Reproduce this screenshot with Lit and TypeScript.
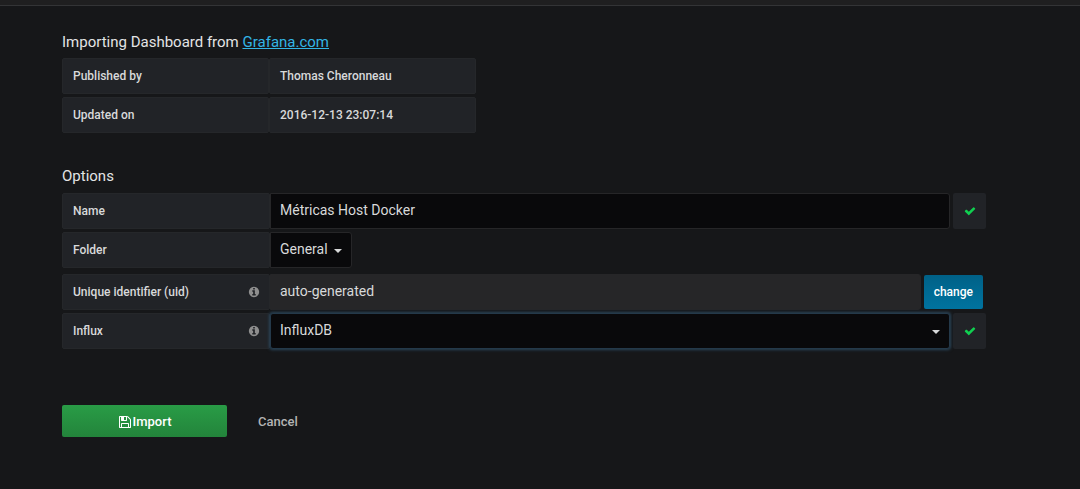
import { LitElement, html, css, svg } from "lit";
import { customElement, state } from "lit/decorators.js";

const PATHS = {
  check:
    "M1671 566q0 40-28 68l-724 724-136 136q-28 28-68 28t-68-28l-136-136-362-362q-28-28-28-68t28-68l136-136q28-28 68-28t68 28l294 295 656-657q28-28 68-28t68 28l136 136q28 28 28 68z",
  info: "M1152 1376v-160q0-14-9-23t-23-9h-96v-512q0-14-9-23t-23-9h-320q-14 0-23 9t-9 23v160q0 14 9 23t23 9h96v320h-96q-14 0-23 9t-9 23v160q0 14 9 23t23 9h448q14 0 23-9t9-23zm-128-896v-160q0-14-9-23t-23-9h-192q-14 0-23 9t-9 23v160q0 14 9 23t23 9h192q14 0 23-9t9-23zm640 416q0 209-103 385.5t-279.5 279.5-385.5 103-385.5-103-279.5-279.5-103-385.5 103-385.5 279.5-279.5 385.5-103 385.5 103 279.5 279.5 103 385.5z",
  save: "M512 1536h768v-384h-768v384zm896 0h128v-896q0-14-10-38.5t-20-34.5l-281-281q-10-10-34-20t-39-10v416q0 40-28 68t-68 28h-576q-40 0-68-28t-28-68v-416h-128v1280h128v-416q0-40 28-68t68-28h832q40 0 68 28t28 68v416zm-384-928v-320q0-13-9.5-22.5t-22.5-9.5h-192q-13 0-22.5 9.5t-9.5 22.5v320q0 13 9.5 22.5t22.5 9.5h192q13 0 22.500-9.500t9.500-22.500zm640 32v928q0 40-28 68t-68 28h-1344q-40 0-68-28t-28-68v-1344q0-40 28-68t68-28h928q40 0 88 20t76 48l280 280q28 28 48 76t20 88z",
};

const icon = (name: keyof typeof PATHS, cls: string) => html`
  <svg class="icon ${cls}" viewBox="0 0 1792 1792" aria-hidden="true">
    ${svg`<path d=${PATHS[name]} />`}
  </svg>
`;

const caret = html`
  <svg class="caret" viewBox="0 0 8 4" aria-hidden="true"><path d="M0 0h8l-4 4z" /></svg>
`;

@customElement("app-root")
export class AppRoot extends LitElement {
  @state() private name = "Métricas Host Docker";

  static styles = css`
    :host {
      display: block;
      min-height: 100vh;
      background: #161719;
      color: #d8d9da;
      font-family: Roboto, "Liberation Sans", sans-serif;
      font-size: 14px;
      line-height: 20px;
    }
    * {
      box-sizing: border-box;
    }
    .topbar {
      height: 6px;
      background: #1f1f20;
      border-bottom: 1px solid #333436;
    }
    .page {
      padding: 26px 94px 52px 62px;
    }
    .title {
      margin: 0 0 6px;
      color: #e3e4e5;
      font-size: 15px;
      font-weight: 400;
      line-height: 20px;
    }
    .link {
      color: #33b5e5;
      text-decoration: underline;
    }
    .facts {
      display: grid;
      grid-template-columns: 207px 207px;
      row-gap: 3px;
      margin: 0 0 33px;
    }
    .label {
      display: flex;
      align-items: center;
      justify-content: space-between;
      flex: 0 0 208px;
      height: 36px;
      margin: 0;
      padding: 0 10px;
      background: #212327;
      border: 1px solid #25272a;
      border-radius: 2px;
      font-size: 12px;
      font-weight: 500;
    }
    .form {
      display: flex;
      flex-direction: column;
      gap: 3px;
      padding-top: 1px;
    }
    .group-end {
      margin-bottom: 3px;
    }
    .row {
      display: flex;
      align-items: center;
    }
    .control {
      display: block;
      width: 100%;
      height: 36px;
      margin: 0;
      padding: 0 9px 2px;
      color: #d8d9da;
      background: #09090b;
      border: 1px solid #262628;
      border-radius: 0 3px 3px 0;
      outline: none;
      appearance: none;
      font: inherit;
    }
    .control:disabled {
      background: #262628;
      opacity: 1;
    }
    .grow {
      flex: 1;
      min-width: 0;
    }
    .select {
      display: grid;
      align-items: center;
    }
    .select > * {
      grid-area: 1 / 1;
    }
    .compact {
      width: 82px;
    }
    .active {
      border-color: #24394a;
      border-radius: 3px;
      box-shadow: 0 0 3px 1px #2a4559;
    }
    .caret {
      justify-self: end;
      width: 8px;
      height: 4px;
      margin: 2px 10px 0 0;
      fill: #d8d9da;
      pointer-events: none;
    }
    .icon {
      display: block;
      flex: none;
      fill: currentColor;
    }
    .info {
      width: 12px;
      height: 12px;
      margin-right: -1px;
      color: #8e8e8e;
    }
    .status {
      display: grid;
      place-items: center;
      width: 33px;
      height: 36px;
      margin-left: 3px;
      background: #212327;
      border-radius: 2px;
      color: #10d050;
    }
    .tick {
      width: 12px;
      height: 12px;
    }
    .button {
      display: flex;
      align-items: center;
      justify-content: center;
      margin: 0;
      border: 0;
      border-radius: 2px;
      color: #fff;
      font: 500 13px/20px Roboto, "Liberation Sans", sans-serif;
      cursor: pointer;
    }
    .change {
      height: 34px;
      margin: 0 3px;
      padding: 0 10px;
      background: linear-gradient(#006187, #00739f);
      font-size: 12px;
    }
    .actions {
      display: flex;
      align-items: center;
      gap: 31px;
      margin-top: 53px;
    }
    .import {
      width: 165px;
      height: 32px;
      gap: 1px;
      padding: 2px 0 0;
      background: linear-gradient(#299c46, #23843b);
    }
    .disk {
      width: 14px;
      height: 14px;
    }
    .cancel {
      padding-top: 2px;
      color: #b3b3b3;
      font-size: 13px;
      font-weight: 500;
      text-decoration: none;
    }
  `;

  render() {
    return html`
      <div class="topbar"></div>
      <main class="page">
        <h1 class="title">
          Importing Dashboard from <a class="link" href="#">Grafana.com</a>
        </h1>
        <dl class="facts">
          <dt class="label">Published by</dt>
          <dd class="label">Thomas Cheronneau</dd>
          <dt class="label">Updated on</dt>
          <dd class="label">2016-12-13 23:07:14</dd>
        </dl>

        <h2 class="title">Options</h2>
        <form class="form" @submit=${(e: Event) => e.preventDefault()}>
          <div class="row">
            <label class="label" for="name">Name</label>
            <div class="grow">
              <input
                class="control"
                id="name"
                type="text"
                .value=${this.name}
                @input=${(e: Event) => (this.name = (e.target as HTMLInputElement).value)}
              />
            </div>
            <span class="status">${icon("check", "tick")}</span>
          </div>
          <div class="row group-end">
            <label class="label" for="folder">Folder</label>
            <div class="select compact">
              <select class="control" id="folder">
                <option>General</option>
              </select>
              ${caret}
            </div>
          </div>
          <div class="row">
            <label class="label" for="uid">Unique identifier (uid) ${icon("info", "info")}</label>
            <div class="grow">
              <input class="control" id="uid" type="text" value="auto-generated" disabled />
            </div>
            <button class="button change" type="button">change</button>
          </div>
          <div class="row">
            <label class="label" for="influx">Influx ${icon("info", "info")}</label>
            <div class="select grow">
              <select class="control active" id="influx">
                <option>InfluxDB</option>
              </select>
              ${caret}
            </div>
            <span class="status">${icon("check", "tick")}</span>
          </div>
          <div class="actions">
            <button class="button import" type="submit">${icon("save", "disk")}Import</button>
            <a class="cancel" href="#">Cancel</a>
          </div>
        </form>
      </main>
    `;
  }
}
